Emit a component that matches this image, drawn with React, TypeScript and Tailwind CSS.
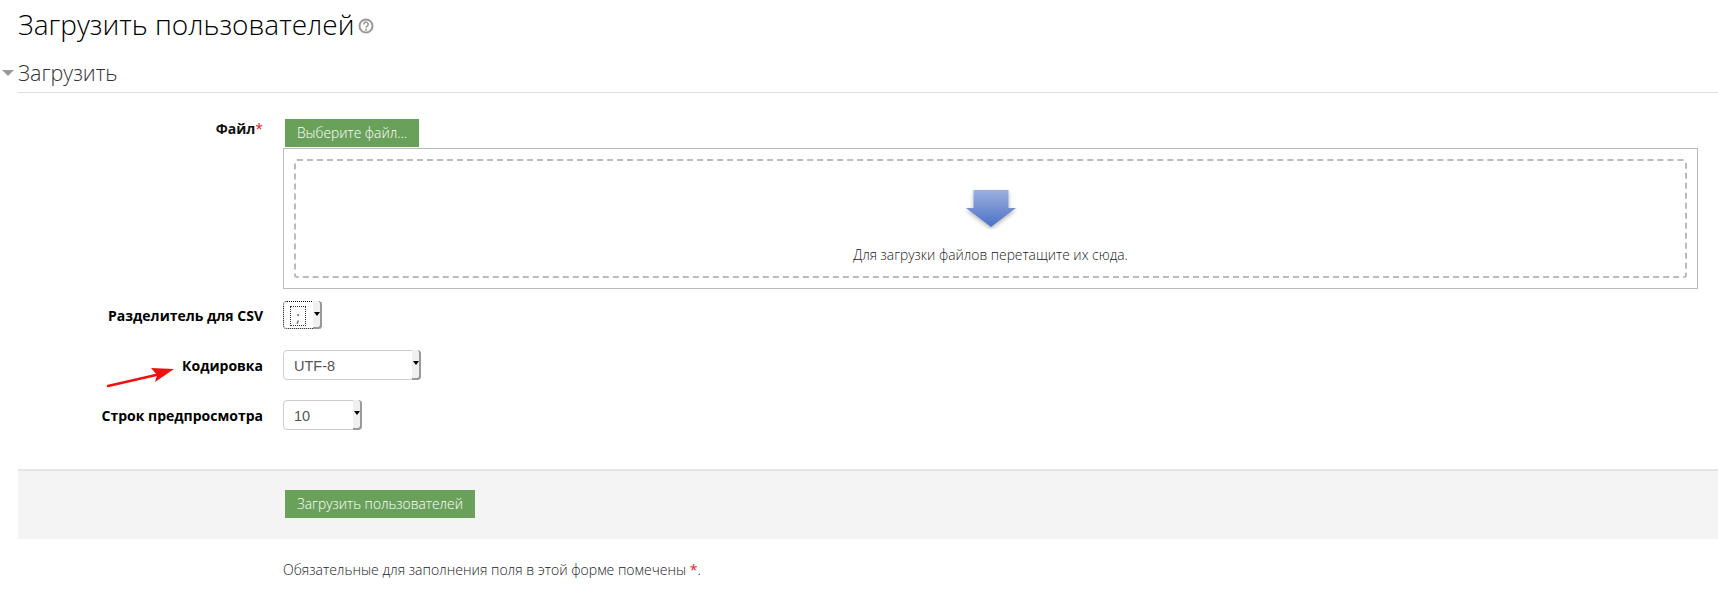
const labelCls = "w-[263px] shrink-0 text-right text-[14px] font-bold text-black";

const SelectBox = ({ value, width }: { value: string; width: string }) => (
  <div className={`relative flex h-[30px] ${width} items-center rounded-[4px] border border-[#cccccc] bg-white pl-[10px] pt-[3px] text-[14.500px] text-[#555555] font-['Liberation_Sans',sans-serif]`}>
    {value}
    <div className="absolute -right-px -top-px -bottom-px flex w-[9px] items-start justify-center rounded-r-[4px] border-r-2 border-b-2 border-[#999999] bg-[#f0f0f0] pt-[11px]">
      <div className="h-0 w-0 border-x-[3px] border-t-[4px] border-x-transparent border-t-black" />
    </div>
  </div>
);

export default function App() {
  return (
    <div className="h-[602px] w-[1718px] overflow-hidden bg-white font-['Open_Sans',sans-serif] text-[#333333]">
      <h1 className="flex h-[50px] items-center pb-[3px] pl-[18px] text-[28px] font-light leading-none text-black">
        Загрузить пользователей
        <svg className="ml-[3px] mt-[5px]" width="16" height="16" viewBox="0 0 16 16">
          <circle cx="8" cy="8" r="6.5" fill="none" stroke="#999999" strokeWidth="2" />
          <path d="M5.8 6.4a2.2 2.2 0 1 1 3.4 1.8c-.8.5-1.2.9-1.2 1.6" fill="none" stroke="#999999" strokeWidth="1.6" />
          <rect x="7.1" y="10.8" width="1.8" height="1.8" fill="#999999" />
        </svg>
      </h1>

      <div className="ml-[18px] mt-[5px] flex h-[38px] items-start border-b border-[#dddddd]">
        <div className="relative text-[21.500px] font-light leading-[36px] text-[#333333]">
          <div className="absolute -left-[16px] top-[15px] h-0 w-0 border-x-[6px] border-t-[6px] border-x-transparent border-t-[#999999]" />
          Загрузить
        </div>
      </div>

      <div className="mt-[26px] flex">
        <div className={`${labelCls} leading-[20px]`}>
          <span className="text-[#111111]">Файл</span>
          <span className="font-normal text-[#e02020]">*</span>
        </div>
        <div className="ml-[20px] flex-1">
          <div className="ml-[2px] flex h-[28px] w-[134px] items-center justify-center bg-[#6aa15a] text-[13.800px] font-light text-white">
            Выберите файл...
          </div>
          <div className="mr-[20px] mt-px h-[141px] border border-[#bbbbbb] p-[10px]">
            <div className="flex h-[119px] flex-col items-center rounded-[3px] border-2 border-dashed border-[#bbbbbb]">
              <svg className="mt-[28px]" width="52" height="40" viewBox="0 0 52 40">
                <defs>
                  <linearGradient id="arrowFill" x1="0" y1="0" x2="0" y2="1">
                    <stop offset="0" stopColor="#9bb0df" />
                    <stop offset="1" stopColor="#4c70c6" />
                  </linearGradient>
                  <filter id="arrowShade" x="-20%" y="-20%" width="140%" height="150%">
                    <feDropShadow dx="0" dy="2" stdDeviation="2" floodColor="#000000" floodOpacity="0.3" />
                  </filter>
                </defs>
                <path d="M8.500 1H43.500V19H51L26 38L1 19H8.500Z" fill="url(#arrowFill)" filter="url(#arrowShade)" />
              </svg>
              <div className="mt-[16px] text-[13.800px] font-light leading-[20px] text-[#222222]">
                Для загрузки файлов перетащите их сюда.
              </div>
            </div>
          </div>
        </div>
      </div>

      <div className="mt-[12px] flex h-[28px] items-center">
        <div className={labelCls}>Разделитель для CSV</div>
        <div className="relative ml-[20px] h-[28px] w-[39px] rounded-[4px] border border-dotted border-black bg-white">
          <div className="absolute left-[6px] top-[4px] flex h-[20px] w-[16px] items-center justify-center border border-dotted border-[#333333] text-[14px] text-[#555555]">;</div>
          <div className="absolute -right-px -top-px -bottom-px flex w-[9px] justify-center rounded-r-[4px] border-r-2 border-b-2 border-[#999999] bg-[#f0f0f0] pt-[11px]">
            <div className="h-0 w-0 border-x-[3px] border-t-[4px] border-x-transparent border-t-black" />
          </div>
        </div>
      </div>

      <div className="relative mt-[21px] flex h-[30px] items-center">
        <svg className="absolute left-[106px] top-[14px]" width="68" height="24" viewBox="0 0 68 24">
          <path d="M2 22L50 11" stroke="#f01010" strokeWidth="2.500" strokeLinecap="round" />
          <path d="M68 5L45 4L51 11L49 18Z" fill="#f01010" />
        </svg>
        <div className={labelCls}>Кодировка</div>
        <div className="ml-[20px]">
          <SelectBox value="UTF-8" width="w-[138px]" />
        </div>
      </div>

      <div className="mt-[20px] flex h-[30px] items-center">
        <div className={labelCls}>Строк предпросмотра</div>
        <div className="ml-[20px]">
          <SelectBox value="10" width="w-[79px]" />
        </div>
      </div>

      <div className="ml-[18px] mt-[39px] h-[70px] border-t-2 border-[#e5e5e5] bg-[#f4f4f4] pl-[267px] pt-[19px]">
        <div className="flex h-[28px] w-[190px] items-center justify-center bg-[#6aa15a] pt-[1px] text-[13.800px] font-light text-white">
          Загрузить пользователей
        </div>
      </div>

      <div className="ml-[283px] mt-[21px] text-[14px] font-light leading-[20px] text-[#222222]">
        Обязательные для заполнения поля в этой форме помечены <span className="font-normal text-[#e02020]">*</span>.
      </div>
    </div>
  );
}
